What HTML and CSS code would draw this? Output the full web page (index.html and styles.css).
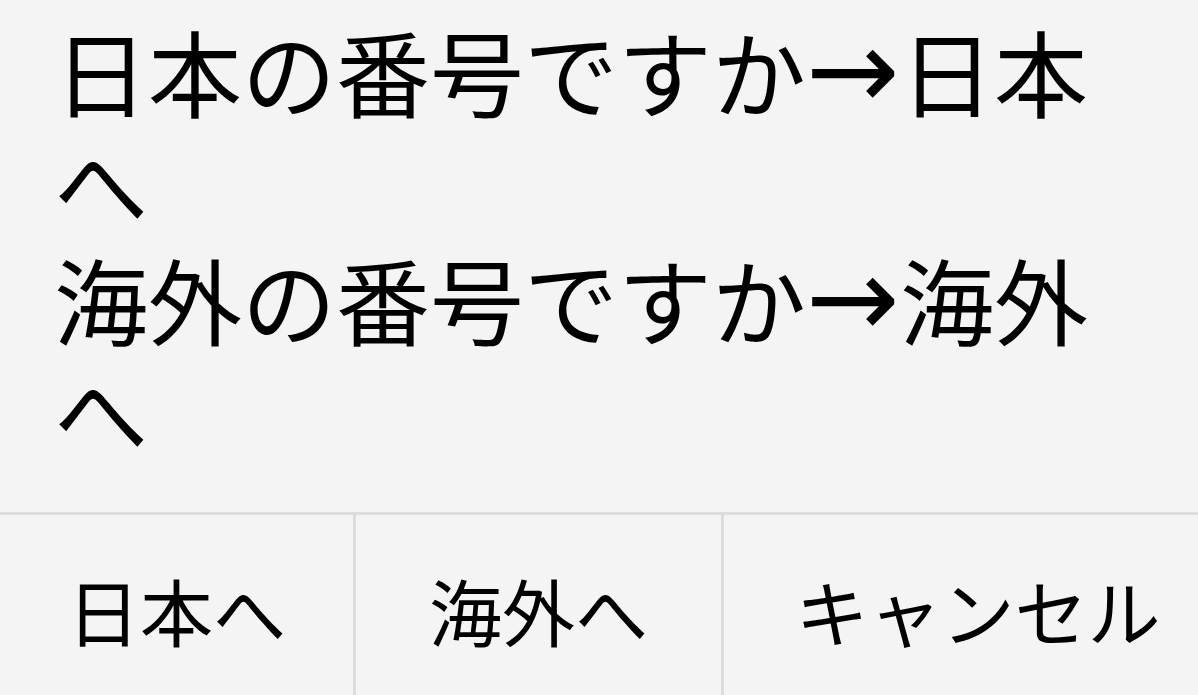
FILE: index.html
```html
<!DOCTYPE html>
<html lang="ja">
<head>
<meta charset="utf-8">
<title>番号の確認</title>
<link rel="stylesheet" href="styles.css">
</head>
<body>
<div class="dialog">
  <div class="message">
    <p class="line">日本の番号ですか<span class="arrow">→</span>日本へ</p>
    <p class="line line-second">海外の番号ですか<span class="arrow">→</span>海外へ</p>
  </div>
  <div class="buttons">
    <div class="btn btn-japan">日本へ</div>
    <div class="btn btn-abroad">海外へ</div>
    <div class="btn btn-cancel">キャンセル</div>
  </div>
</div>
</body>
</html>
```

FILE: styles.css
```css
html, body {
  margin: 0;
  padding: 0;
  background: #f4f4f4;
}
body {
  font-family: "Noto Sans CJK JP", "Noto Sans", sans-serif;
  color: #000;
  width: 1198px;
  height: 695px;
  overflow: hidden;
}
.dialog {
  display: flex;
  flex-direction: column;
  height: 695px;
}
.message {
  font-size: 94px;
  line-height: 111px;
  padding: 15px 54px 0 54px;
  height: 512px;
  box-sizing: border-box;
  flex: none;
}
.line {
  margin: 0;
}
.line-second {
  margin-top: 6px;
}
.arrow {
  display: inline-block;
  width: 94px;
  text-align: center;
  font-family: "DejaVu Sans", sans-serif;
  font-size: 112px;
  line-height: 111px;
  vertical-align: top;
}
.buttons {
  display: flex;
  border-top: 3px solid #dcdcdc;
  height: 183px;
  box-sizing: border-box;
  flex: none;
}
.btn {
  display: flex;
  align-items: center;
  justify-content: center;
  font-size: 73px;
  line-height: 1;
  padding-top: 8px;
  box-sizing: border-box;
}
.btn-japan {
  width: 353px;
}
.btn-abroad {
  width: 368px;
  border-left: 3px solid #dcdcdc;
}
.btn-cancel {
  flex: 1;
  border-left: 3px solid #dcdcdc;
  padding-left: 34px;
}
```
